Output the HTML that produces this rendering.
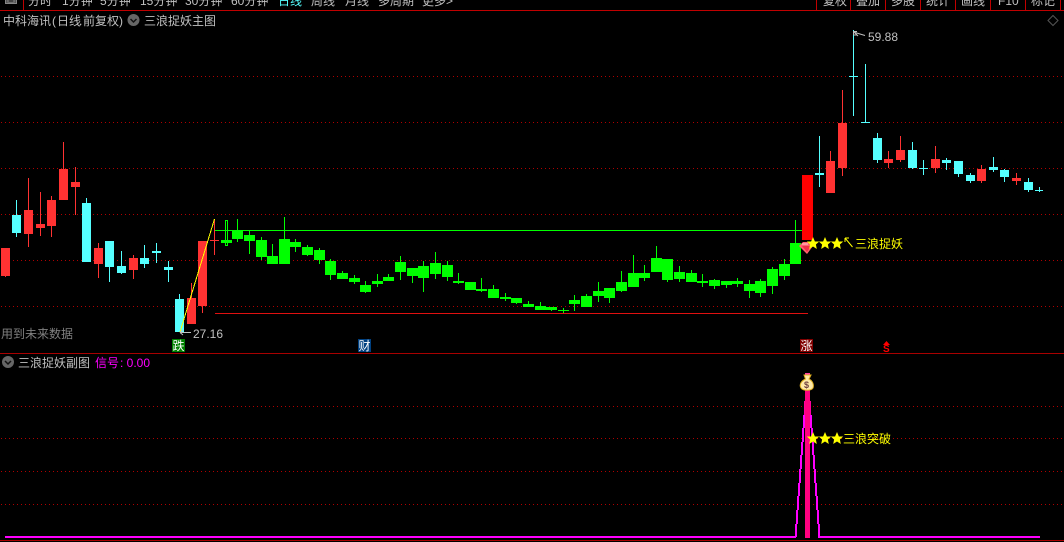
<!DOCTYPE html>
<html lang="zh">
<head>
<meta charset="utf-8">
<style>
html,body{margin:0;padding:0;background:#000;width:1064px;height:542px;overflow:hidden}
svg{display:block}
text{font-family:"WenQuanYi Zen Hei","Liberation Sans","Noto Sans CJK SC",sans-serif;font-size:12px;fill:#c0c0c0}
.n{font-family:"Liberation Sans","WenQuanYi Zen Hei",sans-serif}
.c{shape-rendering:crispEdges}
</style>
</head>
<body>
<svg width="1064" height="542" viewBox="0 0 1064 542" xmlns="http://www.w3.org/2000/svg">
<!-- top bar -->
<text x="28" y="5">分时</text>
<text x="62" y="5"><tspan class="n">1</tspan>分钟</text>
<text x="100" y="5"><tspan class="n">5</tspan>分钟</text>
<text x="140" y="5"><tspan class="n">15</tspan>分钟</text>
<text x="185" y="5"><tspan class="n">30</tspan>分钟</text>
<text x="231" y="5"><tspan class="n">60</tspan>分钟</text>
<text x="278" y="5" style="fill:#55ffff">日线</text>
<text x="311" y="5">周线</text>
<text x="345" y="5">月线</text>
<text x="378" y="5">多周期</text>
<text x="422" y="5">更多&gt;</text>
<text x="823" y="5">复权</text>
<text x="856" y="5">叠加</text>
<text x="891" y="5">多股</text>
<text x="926" y="5">统计</text>
<text x="961" y="5">画线</text>
<text x="998" y="5" class="n">F10</text>
<text x="1031" y="5">标记</text>
<g class="c">
<path d="M5.5 0V3.5H16.5V0M8 0H14V2H8Z" fill="#555" stroke="#888" stroke-width="1"/>
<path d="M0 10.5H1064M23.5 0V10M816.5 0V10M850.5 0V10M885.5 0V10M920.5 0V10M955.5 0V10M990.5 0V10M1025.5 0V10M1060.5 0V10" stroke="#c00000" fill="none"/>
<path d="M0 353.5H1064M0 540.5H1064" stroke="#a80000" fill="none"/>
<!-- grid -->
<path d="M1 76.5H1064M1 122.5H1064M1 168.5H1064M1 214.5H1064M1 260.5H1064M1 306.5H1064" stroke="#b00000" stroke-dasharray="1 3" fill="none"/>
<path d="M1 406.5H1064M1 438.5H1064M1 471.5H1064M1 504.5H1064" stroke="#b00000" stroke-dasharray="1 3" fill="none"/>
<!-- horizontal study lines -->
<path d="M215 230.5H807" stroke="#00ff00" fill="none"/>
<path d="M215 313.5H808" stroke="#e01010" fill="none"/>
<!-- red wicks -->
<path stroke="#ff3232" fill="none" d="M5.5 276V277M28.5 178V247M40.5 192V236M51.5 196V237M63.5 142V200M75.5 167V215M98.5 243V278M133.5 255V279M191.5 283V324M202.5 241V313M214.5 219V255M830.5 151V193M842.5 90V176M888.5 151V168M900.5 136V162M935.5 146V173M981.5 165V183M1016.5 173V185"/>
<!-- red bodies -->
<path fill="#ff3232" d="M1 248h9v28h-9zM24 210h9v24h-9zM36 224h9v4h-9zM47 200h9v26h-9zM59 169h9v31h-9zM71 182h9v5h-9zM94 248h9v16h-9zM129 258h9v12h-9zM187 298h9v26h-9zM198 241h9v65h-9zM210 240h9v1h-9zM826 161h9v32h-9zM838 123h9v45h-9zM884 159h9v4h-9zM896 150h9v10h-9zM931 159h9v9h-9zM977 169h9v12h-9zM1012 178h9v3h-9z"/>
<rect x="802" y="175" width="11" height="65" fill="#ff0000"/>
<!-- cyan wicks -->
<path stroke="#55ffff" fill="none" d="M16.5 200V237M86.5 198V262M109.5 241V282M121.5 251V274M144.5 245V268M156.5 243V263M168.5 261V282M179.5 294V332M819.5 136V187M853.5 30V116M865.5 64V122M877.5 133V163M912.5 142V169M923.5 160V175M946.5 158V170M958.5 161V177M970.5 173V183M993.5 157V172M1004.5 169V182M1028.5 178V192M1039.5 187V192"/>
<!-- cyan bodies -->
<path fill="#55ffff" d="M12 215h9v18h-9zM82 203h9v59h-9zM105 241h9v26h-9zM117 266h9v7h-9zM140 258h9v6h-9zM152 251h9v2h-9zM164 267h9v3h-9zM175 299h9v33h-9zM815 173h9v2h-9zM849 76h9v1h-9zM861 122h9v1h-9zM873 138h9v22h-9zM908 150h9v18h-9zM919 168h9v1h-9zM942 160h9v3h-9zM954 161h9v13h-9zM966 175h9v6h-9zM989 167h9v3h-9zM1000 170h9v7h-9zM1024 182h9v8h-9zM1035 190h8v1h-8z"/>
<!-- green wicks -->
<path stroke="#00ff00" fill="none" d="M237.5 219V242M249.5 230V254M261.5 237V260M272.5 244V264M284.5 217V264M295.5 239V252M307.5 245V256M319.5 248V264M330.5 259V280M342.5 271V279M354.5 275V284M365.5 281V293M377.5 274V287M388.5 274V281M400.5 256V280M412.5 268V283M423.5 261V292M435.5 252V279M447.5 261V281M458.5 273V284M470.5 282V290M481.5 278V292M493.5 285V298M505.5 293V301M516.5 298V304M528.5 301V307M540.5 302V310M551.5 307V311M563.5 308V313M574.5 295V311M586.5 294V307M598.5 282V302M609.5 288V303M621.5 271V292M633.5 255V287M644.5 265V281M656.5 246V272M667.5 259V282M679.5 266V282M691.5 270V282M702.5 274V287M714.5 279V289M726.5 281V288M737.5 278V287M749.5 280V298M760.5 279V297M772.5 267V294M784.5 259V280M795.5 220V264"/>
<path stroke="#00ff00" fill="none" d="M225.5 220.5H227.5V245.5H225.5Z"/>
<!-- green bodies -->
<path fill="#00ff00" d="M221 240h11v3h-11zM232 230h11v9h-11zM244 235h11v6h-11zM256 240h11v17h-11zM267 256h11v8h-11zM279 239h11v25h-11zM290 242h11v5h-11zM302 247h11v8h-11zM314 250h11v10h-11zM325 261h11v14h-11zM337 273h11v6h-11zM349 278h11v4h-11zM360 285h11v7h-11zM372 281h11v3h-11zM383 277h11v4h-11zM395 262h11v10h-11zM407 268h11v8h-11zM418 266h11v12h-11zM430 263h11v11h-11zM442 265h11v12h-11zM453 281h11v2h-11zM465 282h11v8h-11zM476 289h11v2h-11zM488 289h11v9h-11zM500 297h11v2h-11zM511 298h11v5h-11zM523 304h11v3h-11zM535 306h11v4h-11zM546 307h11v3h-11zM558 310h11v1h-11zM569 300h11v4h-11zM581 296h11v11h-11zM593 291h11v5h-11zM604 288h11v10h-11zM616 282h11v9h-11zM628 273h11v14h-11zM639 273h11v5h-11zM651 258h11v14h-11zM662 259h11v21h-11zM674 272h11v7h-11zM686 273h11v9h-11zM697 281h11v2h-11zM709 280h11v6h-11zM721 281h11v4h-11zM732 281h11v3h-11zM744 284h11v7h-11zM755 281h11v12h-11zM767 269h11v17h-11zM779 264h11v12h-11zM790 243h11v21h-11z"/>
<!-- lower pane lines -->
<path d="M5 536h791v2h-791zM818 536h222v2h-222z" fill="#ff00ff"/>
<path fill="#ff00ff" d="M795 524h2v13h-2zM796 510h2v14h-2zM797 496h2v14h-2zM798 483h2v13h-2zM799 469h2v14h-2zM800 455h2v14h-2zM801 442h2v13h-2zM802 428h2v14h-2zM803 415h2v13h-2zM818 524h2v13h-2zM817 510h2v14h-2zM816 496h2v14h-2zM815 483h2v13h-2zM814 469h2v14h-2zM813 455h2v14h-2zM812 442h2v13h-2zM811 428h2v14h-2zM810 415h2v13h-2z"/>
<rect x="804" y="401" width="7" height="14" fill="#ff00a0"/>
<rect x="805" y="390" width="5" height="148" fill="#ff0080"/>
<!-- yellow line -->
<path d="M180 332L214.5 219" stroke="#ffff00" stroke-width="1" fill="none"/>
</g>
<!-- header -->
<text x="3" y="25">中科海讯</text>
<text x="52" y="25" class="n">(</text>
<text x="57" y="25">日线</text>
<text x="79" y="25" class="n">.</text>
<text x="83" y="25">前复权</text>
<text x="119" y="25" class="n">)</text>
<circle cx="133.500" cy="20" r="6" fill="#666"/>
<path d="M130.500 19L133.500 22L136.500 19" stroke="#111" stroke-width="1.500" fill="none"/>
<text x="144" y="25">三浪捉妖主图</text>
<!-- diamond -->
<path d="M1053 15.500L1058 20.500L1053 25.500L1048 20.500Z" stroke="#555" fill="none"/>
<!-- high label -->
<path d="M853.500 35V31.500H857M854 32L858 36M855 32.500L865 35.500M854 35H857" stroke="#c0c0c0" fill="none"/>
<text x="868" y="41" class="n">59.88</text>
<!-- low label -->
<path d="M180 332.500H191M180 332.500L183 330M180 332.500L183 335" stroke="#c0c0c0" fill="none"/>
<text x="193" y="338" class="n">27.16</text>
<text x="1" y="338" style="fill:#808080">用到未来数据</text>
<!-- badges -->
<rect x="172" y="339" width="13" height="13" fill="#008000" class="c"/>
<text x="172.500" y="350" style="fill:#fff">跌</text>
<rect x="358" y="339" width="13" height="13" fill="#004080" class="c"/>
<text x="358.500" y="350" style="fill:#fff">财</text>
<rect x="800" y="339" width="13" height="13" fill="#800000" class="c"/>
<text x="800.500" y="350" style="fill:#fff">涨</text>
<path d="M886.500 341L890 345H883Z" fill="#ff0000"/>
<text x="883" y="352" class="n" style="fill:#ff0000;font-size:10px;font-weight:bold">S</text>
<!-- sub header -->
<circle cx="8" cy="362" r="6" fill="#666"/>
<path d="M5 361L8 364L11 361" stroke="#111" stroke-width="1.500" fill="none"/>
<text x="18" y="367">三浪捉妖副图</text>
<text x="95" y="367" style="fill:#ff00ff">信号</text>
<text x="120" y="367" class="n" style="fill:#ff00ff">: 0.00</text>
<!-- gem -->
<path d="M799 246L803 242H811L813 246L807 254Z" fill="#ff6070"/>
<path d="M802 246H811L807 252Z" fill="#f03048"/>
<path d="M802 244H808" stroke="#ffd0d0" fill="none"/>
<!-- stars -->
<g fill="#ffff00">
<path d="M813 237L814.900 241.500H819.200L815.900 244.500L816.800 249L813 246.500L809.200 249L810.100 244.500L806.800 241.500H811.100Z"/>
<path d="M825 237L826.900 241.500H831.200L827.900 244.500L828.800 249L825 246.500L821.200 249L822.100 244.500L818.800 241.500H823.100Z"/>
<path d="M837 237L838.900 241.500H843.200L839.900 244.500L840.800 249L837 246.500L833.200 249L834.100 244.500L830.800 241.500H835.100Z"/>
<path d="M813 432L814.900 436.500H819.200L815.900 439.500L816.800 444L813 441.500L809.200 444L810.100 439.500L806.800 436.500H811.100Z"/>
<path d="M825 432L826.900 436.500H831.200L827.900 439.500L828.800 444L825 441.500L821.200 444L822.100 439.500L818.800 436.500H823.100Z"/>
<path d="M837 432L838.900 436.500H843.200L839.900 439.500L840.800 444L837 441.500L833.200 444L834.100 439.500L830.800 436.500H835.100Z"/>
</g>
<path d="M845 238L852.500 247M845 238V242M845 238H849" stroke="#ffff00" fill="none"/>
<text x="855" y="248" style="fill:#ffff00">三浪捉妖</text>
<text x="843" y="443" style="fill:#ffff00">三浪突破</text>
<!-- money bag -->
<rect x="805" y="373" width="5" height="2" fill="#ff40a0" class="c"/>
<path d="M804 375H811L809 379C813 381 814 385 813 388C811 391 803 391 801 388C799 385 801 381 805.500 379Z" fill="#ffe9a8" stroke="#e0b020" stroke-width="1"/>
<text x="804" y="388" class="n" style="fill:#704040;font-size:9px;font-weight:bold">$</text>
</svg>
</body>
</html>
